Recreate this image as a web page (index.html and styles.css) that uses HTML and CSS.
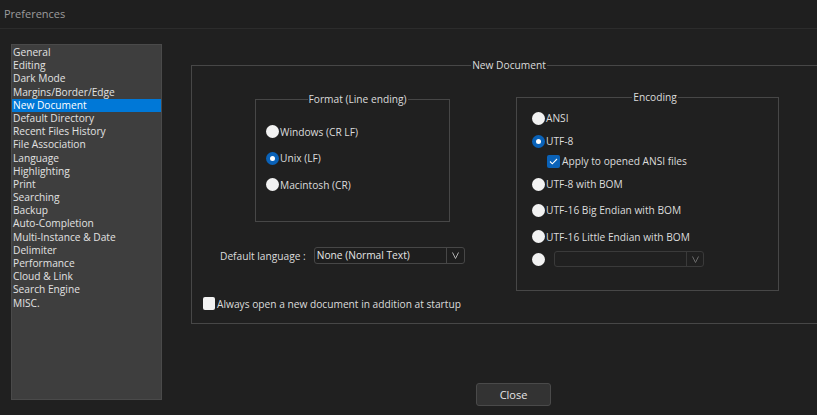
FILE: index.html
```html
<!DOCTYPE html>
<html>
<head>
<meta charset="utf-8">
<title>Preferences</title>
<link rel="stylesheet" href="styles.css">
</head>
<body>
<div class="titlebar">Preferences</div>
<div class="main">
  <ul class="navlist">
    <li>General</li>
    <li>Editing</li>
    <li>Dark Mode</li>
    <li>Margins/Border/Edge</li>
    <li class="selected">New Document</li>
    <li>Default Directory</li>
    <li>Recent Files History</li>
    <li>File Association</li>
    <li>Language</li>
    <li>Highlighting</li>
    <li>Print</li>
    <li>Searching</li>
    <li>Backup</li>
    <li>Auto-Completion</li>
    <li>Multi-Instance &amp; Date</li>
    <li>Delimiter</li>
    <li>Performance</li>
    <li>Cloud &amp; Link</li>
    <li>Search Engine</li>
    <li>MISC.</li>
  </ul>
  <div class="content">
    <fieldset class="group outer">
      <legend>New Document</legend>
      <div class="cols">
        <div class="leftcol">
          <fieldset class="group format">
            <legend>Format (Line ending)</legend>
            <div class="opts">
              <label class="opt"><span class="radio"></span>Windows (CR LF)</label>
              <label class="opt"><span class="radio on"></span>Unix (LF)</label>
              <label class="opt"><span class="radio"></span>Macintosh (CR)</label>
            </div>
          </fieldset>
          <div class="langrow">
            <span class="langlabel">Default language :</span>
            <div class="combo lang">
              <span class="combotext">None (Normal Text)</span>
              <span class="arrow"><svg width="7" height="7" viewBox="0 0 7 7"><polyline points="0.5,0.5 3.5,6.5 6.5,0.5" fill="none" stroke="#b0b0b0" stroke-width="1"/></svg></span>
            </div>
          </div>
          <label class="opt always"><span class="check"></span>Always open a new document in addition at startup</label>
        </div>
        <fieldset class="group encoding">
          <legend>Encoding</legend>
          <label class="opt e1"><span class="radio"></span>ANSI</label>
          <label class="opt e2"><span class="radio on"></span>UTF-8</label>
          <label class="opt e3"><span class="check on"><svg width="9" height="7" viewBox="0 0 9 7"><polyline points="1,3.5 3.3,5.8 8,1" fill="none" stroke="#ffffff" stroke-width="1.1"/></svg></span>Apply to opened ANSI files</label>
          <label class="opt e4"><span class="radio"></span>UTF-8 with BOM</label>
          <label class="opt e5"><span class="radio"></span>UTF-16 Big Endian with BOM</label>
          <label class="opt e6"><span class="radio"></span>UTF-16 Little Endian with BOM</label>
          <div class="opt e7"><span class="radio"></span>
            <div class="combo enc">
              <span class="combotext"></span>
              <span class="arrow"><svg width="7" height="7" viewBox="0 0 7 7"><polyline points="0.5,0.5 3.5,6.5 6.5,0.5" fill="none" stroke="#6a6a6a" stroke-width="1"/></svg></span>
            </div>
          </div>
        </fieldset>
      </div>
    </fieldset>
    <button class="closebtn">Close</button>
  </div>
</div>
</body>
</html>
```
FILE: styles.css
```css
* { box-sizing: border-box; }
html, body {
  margin: 0;
  padding: 0;
}
body {
  width: 817px;
  height: 415px;
  overflow: hidden;
  background: #202020;
  color: #dcdcdc;
  font-family: "Open Sans", "Noto Sans", sans-serif;
  font-size: 10.2px;
}
.titlebar {
  height: 29px;
  line-height: 28px;
  padding-left: 4px;
  color: #9c9c9c;
  font-size: 11px;
  border-bottom: 1px solid #2c2c2c;
  background: #1f1f1f;
}
.main {
  display: flex;
  align-items: flex-start;
  padding-top: 15px;
}
.navlist {
  list-style: none;
  margin: 0 0 0 11px;
  padding: 1px 0 0 0;
  width: 151px;
  height: 356px;
  background: #3e3e3e;
  border: 1px solid #4a4a4a;
  flex-shrink: 0;
}
.navlist li {
  height: 13.2px;
  line-height: 13.2px;
  padding-left: 1px;
  color: #e2e2e2;
  white-space: nowrap;
}
.navlist li.selected {
  background: #0078d7;
  color: #ffffff;
}
.content {
  margin-left: 29px;
  width: 636px;
  flex-shrink: 0;
  display: flex;
  flex-direction: column;
}
.group {
  margin: 0;
  padding: 0;
  border: 1px solid #474747;
  min-width: 0;
}
.group > legend {
  margin: 0 auto;
  padding: 0 1px;
  line-height: 13px;
  height: 13px;
  color: #dcdcdc;
}
.outer {
  margin-top: 15px;
  height: 265px;
  width: 636px;
}
.cols {
  display: flex;
  align-items: flex-start;
}
.leftcol {
  width: 324px;
  flex-shrink: 0;
  display: flex;
  flex-direction: column;
}
.format {
  margin-top: 21px;
  margin-left: 63px;
  width: 195px;
  padding: 19px 0 30px 10px;
}
.opts {
  display: flex;
  flex-direction: column;
  gap: 13.5px;
}
.opt {
  display: flex;
  align-items: center;
  height: 13px;
  white-space: nowrap;
  gap: 1px;
}
.radio {
  width: 13px;
  height: 13px;
  border-radius: 50%;
  background: #f2f2f2;
  flex-shrink: 0;
  display: flex;
  align-items: center;
  justify-content: center;
}
.radio.on {
  background: #0a62b8;
}
.radio.on::after {
  content: "";
  width: 5px;
  height: 5px;
  border-radius: 50%;
  background: #ffffff;
}
.check {
  width: 12px;
  height: 13px;
  border-radius: 2px;
  background: #f2f2f2;
  flex-shrink: 0;
  display: flex;
  align-items: center;
  justify-content: center;
}
.check.on {
  background: #0a62b8;
  width: 13px;
}
.langrow {
  display: flex;
  align-items: center;
  margin-top: 25px;
  margin-left: 28px;
  height: 17px;
  gap: 8px;
}
.combo {
  display: flex;
  align-items: stretch;
  border: 1px solid #474747;
  border-radius: 3px;
  background: #1e1e1e;
}
.combotext {
  flex: 1;
  padding-left: 2px;
  line-height: 14px;
  color: #e6e6e6;
}
.arrow {
  width: 18px;
  border-left: 1px solid #474747;
  display: flex;
  align-items: center;
  justify-content: center;
}
.lang {
  width: 151px;
  height: 17px;
}
.always {
  margin-top: 33px;
  margin-left: 11px;
  gap: 2px;
}
.encoding {
  margin-top: 18.5px;
  width: 263px;
  padding: 8px 0 23px 15px;
  display: flex;
  flex-direction: column;
}
.e2 { margin-top: 10px; }
.e3 { margin-top: 7px; margin-left: 15px; gap: 2px; }
.e4 { margin-top: 10px; }
.e5 { margin-top: 13px; }
.e6 { margin-top: 13.5px; }
.e7 { margin-top: 8px; height: 16px; gap: 9px; }
.enc {
  width: 150px;
  height: 16px;
  border-color: #3a3a3a;
  background: #202020;
}
.enc .arrow {
  width: 17px;
  border-left-color: #3a3a3a;
}
.closebtn {
  margin-top: 59px;
  margin-left: 285px;
  width: 75px;
  height: 23px;
  background: #333333;
  border: 1px solid #4a4a4a;
  border-radius: 3px;
  color: #e6e6e6;
  font-family: "Open Sans", "Noto Sans", sans-serif;
  font-size: 11px;
  padding: 0;
}
```
